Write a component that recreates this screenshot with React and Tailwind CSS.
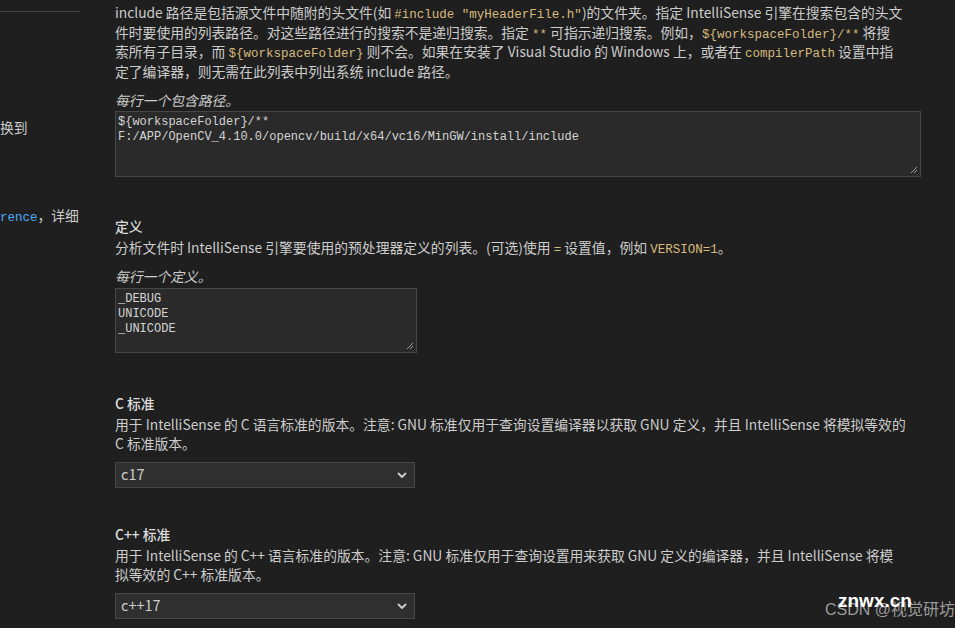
import React from 'react';

const code = "font-['Liberation_Mono',monospace] text-[12.5px] leading-none text-[#d7ba7d]";

const Grip = () => (
  <svg className="absolute right-[2px] bottom-[2px]" width="9" height="9" viewBox="0 0 9 9">
    <path d="M8 2 L2 8 M8 5 L5 8" stroke="#9a9a9a" strokeWidth="1" />
  </svg>
);

const Chevron = () => (
  <svg width="12" height="12" viewBox="0 0 12 12" fill="none">
    <path d="M2.5 4.5 L6 8 L9.5 4.5" stroke="#d0d0d0" strokeWidth="1.8" strokeLinecap="round" strokeLinejoin="round" />
  </svg>
);

const Select = ({ value }) => (
  <div className="w-[300px] h-[26px] bg-[#2f2f2f] border border-[#474747] flex items-center justify-between pl-[5px] pr-[6px]">
    <span className="text-[14.5px] leading-none text-[#cccccc]">{value}</span>
    <Chevron />
  </div>
);

const Title = ({ children }) => (
  <div className="leading-[20px] font-medium text-[#dddddd]">{children}</div>
);

export default function App() {
  return (
    <div className="relative w-full h-[628px] overflow-hidden bg-[#1f1f1f] flex font-['Noto_Sans_CJK_SC',sans-serif] text-[13.8px] text-[#cccccc]">
      {/* Sidebar */}
      <div className="w-[115px] shrink-0 pt-[11px]">
        <div className="w-[80px] h-px bg-[#444444]"></div>
        <div className="mt-[105px] leading-[20px] whitespace-nowrap">换到</div>
        <div className="mt-[68px] leading-[20px] whitespace-nowrap">
          <span className="font-['Liberation_Mono',monospace] text-[12.5px] leading-none text-[#4daafc]">rence</span>，详细
        </div>
      </div>

      {/* Settings */}
      <div className="flex-1 pr-[34px] pt-[3px]">
        {/* include path */}
        <div className="leading-[19.5px] whitespace-nowrap">
          <div>include 路径是包括源文件中随附的头文件(如 <span className={code}>#include "myHeaderFile.h"</span>)的文件夹。指定 IntelliSense 引擎在搜索包含的头文</div>
          <div>件时要使用的列表路径。对这些路径进行的搜索不是递归搜索。指定 <span className={code}>**</span> 可指示递归搜索。例如，<span className={code}>{'${workspaceFolder}/**'}</span> 将搜</div>
          <div>索所有子目录，而 <span className={code}>{'${workspaceFolder}'}</span> 则不会。如果在安装了 Visual Studio 的 Windows 上，或者在 <span className={code}>compilerPath</span> 设置中指</div>
          <div>定了编译器，则无需在此列表中列出系统 include 路径。</div>
        </div>
        <div className="mt-[9px] leading-[20px] italic">每行一个包含路径。</div>
        <div className="relative mt-px h-[66px] bg-[#2a2a2a] border border-[#474747] px-[2px] pt-[3px] font-['Liberation_Mono',monospace] text-[12px] leading-[15px] text-[#d4d4d4] whitespace-pre">
          <div>{'${workspaceFolder}/**'}</div>
          <div>F:/APP/OpenCV_4.10.0/opencv/build/x64/vc16/MinGW/install/include</div>
          <Grip />
        </div>

        {/* defines */}
        <div className="mt-[39px]">
          <Title>定义</Title>
          <div className="mt-[2px] leading-[19.5px] whitespace-nowrap">
            分析文件时 IntelliSense 引擎要使用的预处理器定义的列表。(可选)使用 <span className={code}>=</span> 设置值，例如 <span className={code}>VERSION=1</span>。
          </div>
          <div className="mt-[8px] leading-[20px] italic">每行一个定义。</div>
          <div className="relative mt-[2px] w-[302px] h-[65px] bg-[#2a2a2a] border border-[#474747] px-[2px] pt-[3px] font-['Liberation_Mono',monospace] text-[12px] leading-[15px] text-[#d4d4d4] whitespace-pre">
            <div>_DEBUG</div>
            <div>UNICODE</div>
            <div>_UNICODE</div>
            <Grip />
          </div>
        </div>

        {/* C standard */}
        <div className="mt-[40px]">
          <Title>C 标准</Title>
          <div className="mt-[2px] leading-[19.5px] whitespace-nowrap">
            <div>用于 IntelliSense 的 C 语言标准的版本。注意: GNU 标准仅用于查询设置编译器以获取 GNU 定义，并且 IntelliSense 将模拟等效的</div>
            <div>C 标准版本。</div>
          </div>
          <div className="mt-[8px]">
            <Select value="c17" />
          </div>
        </div>

        {/* C++ standard */}
        <div className="mt-[36px]">
          <Title>C++ 标准</Title>
          <div className="mt-[2px] leading-[19.5px] whitespace-nowrap">
            <div>用于 IntelliSense 的 C++ 语言标准的版本。注意: GNU 标准仅用于查询设置用来获取 GNU 定义的编译器，并且 IntelliSense 将模</div>
            <div>拟等效的 C++ 标准版本。</div>
          </div>
          <div className="mt-[8px]">
            <Select value="c++17" />
          </div>
        </div>
      </div>

      {/* Watermark */}
      <div className="absolute right-0 bottom-[8px] text-[16px] leading-[20px] text-[#9a9a9a] font-['Liberation_Sans','Noto_Sans_CJK_SC',sans-serif] whitespace-nowrap">
        CSDN @视觉研坊
      </div>
      <div className="absolute left-[838px] top-[590px] text-[19px] leading-[22px] font-bold text-white font-['Liberation_Sans',sans-serif]">
        znwx.cn
      </div>
    </div>
  );
}
